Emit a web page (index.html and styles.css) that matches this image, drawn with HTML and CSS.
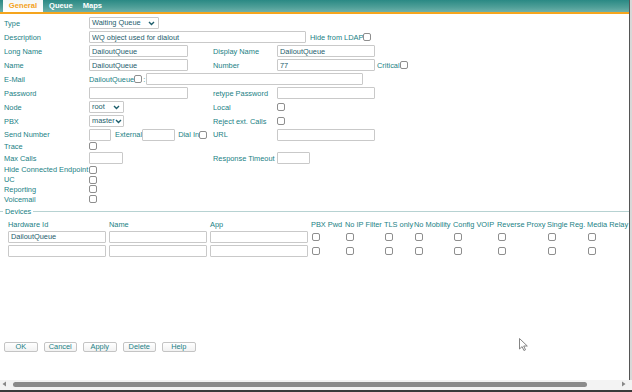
FILE: index.html
```html
<!DOCTYPE html>
<html>
<head>
<meta charset="utf-8">
<link rel="stylesheet" href="styles.css">
</head>
<body>
<div class="frame">
  <div class="main">
    <div class="tabs">
      <span class="tab active">General</span>
      <span class="tab">Queue</span>
      <span class="tab">Maps</span>
    </div>
    <div class="form">
      <div class="row">
        <span class="lbl">Type</span>
        <span class="sel w-type">Waiting Queue<svg class="chev" width="7" height="5" viewBox="0 0 7 5"><path d="M1 1l2.5 2.5L6 1" fill="none" stroke="#1d5d6b" stroke-width="1.4"/></svg></span>
      </div>
      <div class="row">
        <span class="lbl">Description</span>
        <input class="txt w-desc" type="text" value="WQ object used for dialout">
        <span class="txtlbl ml4">Hide from LDAP</span><input class="cb ml2" type="checkbox">
      </div>
      <div class="row">
        <span class="lbl">Long Name</span>
        <span class="c1"><input class="txt w-std" type="text" value="DailoutQueue"></span>
        <span class="lbl2">Display Name</span>
        <input class="txt w-std2" type="text" value="DailoutQueue">
      </div>
      <div class="row">
        <span class="lbl">Name</span>
        <span class="c1"><input class="txt w-std" type="text" value="DailoutQueue"></span>
        <span class="lbl2">Number</span>
        <input class="txt w-std2" type="text" value="77">
        <span class="txtlbl ml2">Critical</span><input class="cb ml1" type="checkbox">
      </div>
      <div class="row">
        <span class="lbl">E-Mail</span>
        <span class="txtlbl">DailoutQueue</span><input class="cb" type="checkbox"><span class="txtlbl colon">:</span>
        <input class="txt w-mail" type="text">
      </div>
      <div class="row">
        <span class="lbl">Password</span>
        <span class="c1"><input class="txt w-std" type="password"></span>
        <span class="lbl2">retype Password</span>
        <input class="txt w-std2" type="password">
      </div>
      <div class="row">
        <span class="lbl">Node</span>
        <span class="c1"><span class="sel w-small">root<svg class="chev" width="7" height="5" viewBox="0 0 7 5"><path d="M1 1l2.5 2.5L6 1" fill="none" stroke="#1d5d6b" stroke-width="1.4"/></svg></span></span>
        <span class="lbl2">Local</span>
        <input class="cb" type="checkbox">
      </div>
      <div class="row">
        <span class="lbl">PBX</span>
        <span class="c1"><span class="sel w-small">master<svg class="chev" width="7" height="5" viewBox="0 0 7 5"><path d="M1 1l2.5 2.5L6 1" fill="none" stroke="#1d5d6b" stroke-width="1.4"/></svg></span></span>
        <span class="lbl2">Reject ext. Calls</span>
        <input class="cb" type="checkbox">
      </div>
      <div class="row r-send">
        <span class="lbl">Send Number</span>
        <span class="c1">
          <input class="txt w-send" type="text">
          <span class="txtlbl ml4">External</span>
          <input class="txt w-ext ml-ext" type="text">
          <span class="txtlbl ml-dl">Dial In</span><input class="cb ml-dial" type="checkbox">
        </span>
        <span class="lbl2">URL</span>
        <input class="txt w-std2" type="text">
      </div>
      <div class="row r-trace">
        <span class="lbl">Trace</span>
        <input class="cb" type="checkbox">
      </div>
      <div class="row">
        <span class="lbl">Max Calls</span>
        <span class="c1"><input class="txt w-max" type="text"></span>
        <span class="lbl2">Response Timeout</span>
        <input class="txt w-resp" type="text">
      </div>
      <div class="row r-cb">
        <span class="lbl">Hide Connected Endpoint</span>
        <input class="cb" type="checkbox">
      </div>
      <div class="row r-cb">
        <span class="lbl">UC</span>
        <input class="cb" type="checkbox">
      </div>
      <div class="row r-cb">
        <span class="lbl">Reporting</span>
        <input class="cb" type="checkbox">
      </div>
      <div class="row r-cb">
        <span class="lbl">Voicemail</span>
        <input class="cb" type="checkbox">
      </div>
    </div>

    <div class="devices">
      <div class="legend"><span class="dash"></span><span class="legtext">Devices</span><span class="rule"></span></div>
      <div class="dgrid">
        <span class="th">Hardware Id</span>
        <span class="th">Name</span>
        <span class="th">App</span>
        <span class="th">PBX Pwd</span>
        <span class="th">No IP Filter</span>
        <span class="th">TLS only</span>
        <span class="th">No Mobility</span>
        <span class="th">Config VOIP</span>
        <span class="th">Reverse Proxy</span>
        <span class="th">Single Reg.</span>
        <span class="th">Media Relay</span>

        <input class="txt dt" type="text" value="DailoutQueue">
        <input class="txt dt" type="text">
        <input class="txt dt" type="text">
        <span class="td"><input class="cb" type="checkbox"></span>
        <span class="td"><input class="cb" type="checkbox"></span>
        <span class="td"><input class="cb" type="checkbox"></span>
        <span class="td"><input class="cb" type="checkbox"></span>
        <span class="td"><input class="cb" type="checkbox"></span>
        <span class="td"><input class="cb" type="checkbox"></span>
        <span class="td"><input class="cb" type="checkbox"></span>
        <span class="td"><input class="cb" type="checkbox"></span>

        <input class="txt dt" type="text">
        <input class="txt dt" type="text">
        <input class="txt dt" type="text">
        <span class="td"><input class="cb" type="checkbox"></span>
        <span class="td"><input class="cb" type="checkbox"></span>
        <span class="td"><input class="cb" type="checkbox"></span>
        <span class="td"><input class="cb" type="checkbox"></span>
        <span class="td"><input class="cb" type="checkbox"></span>
        <span class="td"><input class="cb" type="checkbox"></span>
        <span class="td"><input class="cb" type="checkbox"></span>
        <span class="td"><input class="cb" type="checkbox"></span>
      </div>
    </div>

    <div class="buttons">
      <button class="btn">OK</button>
      <button class="btn">Cancel</button>
      <button class="btn">Apply</button>
      <button class="btn">Delete</button>
      <button class="btn">Help</button>
    </div>

    <svg class="cursor" width="9" height="13" viewBox="0 0 9 13"><path d="M0.5 0.5v10.5l2.6-2.4 1.8 3.9 1.6-0.7-1.8-3.8h3.6z" fill="#fff" stroke="#777" stroke-width="0.9" stroke-linejoin="round"/></svg>
  </div>
  <div class="vbar"></div>
</div>
<div class="hscroll">
  <svg class="arr" width="5" height="6" viewBox="0 0 5 6"><path d="M4 0.5v5L0.5 3z" fill="#888"/></svg>
  <span class="thumb"></span>
  <svg class="arr" width="5" height="6" viewBox="0 0 5 6"><path d="M1 0.5v5L4.5 3z" fill="#888"/></svg>
</div>
</body>
</html>
```
FILE: styles.css
```css
* { box-sizing: border-box; }
html, body { margin: 0; padding: 0; }
body {
  width: 632px;
  height: 392px;
  overflow: hidden;
  background: #fff;
  font-family: "Liberation Sans", Arial, sans-serif;
  font-size: 7.4px;
  color: #217f85;
  display: flex;
  flex-direction: column;
}
.frame {
  flex: 1;
  display: flex;
  min-height: 0;
}
.main {
  flex: 1;
  position: relative;
  display: flex;
  flex-direction: column;
}
.vbar {
  width: 3px;
  background: linear-gradient(to right, #555 0, #555 1px, #d8d8d8 1px);
}
.tabs {
  height: 14px;
  background: linear-gradient(to bottom, #2a8984 0%, #4f9f98 60%, #6eb1aa 100%);
  border-bottom: 2px solid #f5a51e;
  display: flex;
  align-items: stretch;
  padding-left: 3px;
}
.tab {
  font-weight: bold;
  color: #fff;
  font-size: 7.6px;
  line-height: 12px;
  padding: 0 5px;
}
.tab.active {
  background: linear-gradient(to bottom, #f4f7f6, #ffffff);
  color: #f3a21b;
  width: 40px;
  text-align: center;
  padding: 0;
  margin-right: 1px;
}
.form {
  padding: 2px 0 0 4px;
}
.row {
  display: flex;
  align-items: center;
  height: 14px;
  white-space: nowrap;
}
.r-send { height: 13px; }
.r-trace { height: 10px; }
.r-cb { height: 9.8px; }
.lbl { width: 85px; flex: none; }
.c1 { width: 124px; flex: none; display: flex; align-items: center; }
.lbl2 { width: 64px; flex: none; }
.txtlbl { flex: none; }
.colon { margin: 0 1px 0 1px; }
.ml1 { margin-left: 1px; }
.ml2 { margin-left: 2px; }
.ml4 { margin-left: 4px; }
.ml-ext { margin-left: 3px; }
.ml-dl { margin-left: 3px; }
.ml-dial { margin-left: 2px; }

.txt {
  height: 12px;
  border: 1px solid #c9c9c9;
  border-radius: 1px;
  font-family: "Liberation Sans", Arial, sans-serif;
  font-size: 7.4px;
  color: #1d5d6b;
  padding: 0 2px;
  margin: 0;
  background: #fff;
  outline: none;
  flex: none;
}
.w-desc { width: 217px; }
.w-std { width: 99px; }
.w-std2 { width: 98px; }
.w-mail { width: 217px; }
.w-send { width: 22px; }
.w-ext { width: 33px; }
.w-max { width: 34px; }
.w-resp { width: 33px; }

.sel {
  height: 12px;
  border: 1px solid #c9c9c9;
  border-radius: 1px;
  color: #1d5d6b;
  padding: 0 2px;
  display: flex;
  align-items: center;
  justify-content: space-between;
  flex: none;
  line-height: 10px;
}
.w-type { width: 70px; }
.w-small { width: 35px; }
.chev { flex: none; margin-right: 1px; }

.cb {
  -webkit-appearance: none;
  appearance: none;
  width: 8px;
  height: 8px;
  margin: 0;
  border: 1px solid #8e8e8e;
  border-radius: 2px;
  background: #fff;
  flex: none;
}

.devices {
  margin-top: 2.5px;
}
.legend {
  display: flex;
  align-items: center;
  height: 10px;
}
.dash {
  width: 3px;
  height: 1px;
  background: #b7d2d2;
  margin-right: 2px;
}
.legtext { flex: none; }
.rule {
  flex: 1;
  height: 1px;
  background: #b7d2d2;
  margin-left: 2px;
}
.dgrid {
  display: grid;
  grid-template-columns: 98px 98px 98px 31px 36px 27px 36px 41px 47px 37px 40px;
  column-gap: 3px;
  row-gap: 2px;
  padding: 4px 0 0 8px;
  white-space: nowrap;
  justify-content: start;
  align-items: center;
}
.th { line-height: 8px; }
.dt { width: 98px; }
.td { display: flex; align-items: center; height: 12px; padding-left: 1px; }

.buttons {
  display: flex;
  gap: 6px;
  padding-left: 4px;
  margin-top: 85px;
}
.btn {
  width: 33.5px;
  height: 10px;
  padding: 0;
  margin: 0;
  border: 1px solid #c4c4c4;
  border-radius: 2px;
  background: linear-gradient(to bottom, #ffffff, #f2f2f2);
  font-family: "Liberation Sans", Arial, sans-serif;
  font-size: 7.4px;
  line-height: 8px;
  color: #217f85;
}

.cursor {
  position: absolute;
  left: 519px;
  top: 338px;
}

.hscroll {
  height: 12px;
  flex: none;
  display: flex;
  align-items: center;
  padding: 0 6px 2px 2px;
  background: #f3f3f3;
  border-bottom: 2px solid #3a3a3a;
}
.arr { flex: none; }
.thumb {
  height: 5px;
  width: 574px;
  margin: 0 auto 0 6px;
  background: #8a8a8a;
  border-radius: 3px;
}
```
